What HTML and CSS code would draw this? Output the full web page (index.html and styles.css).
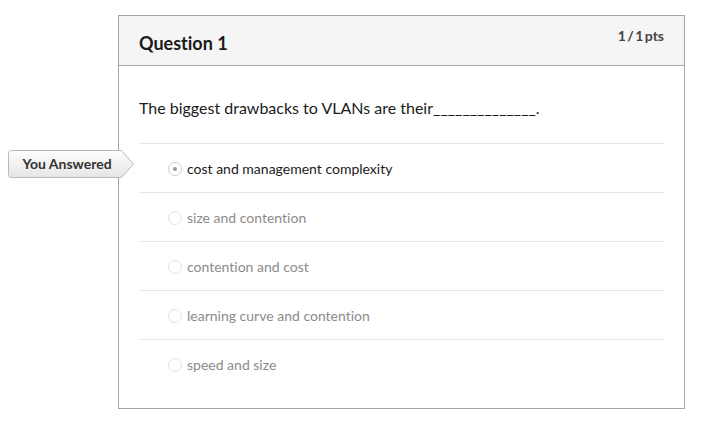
FILE: index.html
```html
<!DOCTYPE html>
<html>
<head>
<meta charset="utf-8">
<link rel="stylesheet" href="styles.css">
</head>
<body>
<div class="page">
  <div class="card">
    <div class="header">
      <h2 class="title">Question 1</h2>
      <div class="pts">1 / 1 pts</div>
    </div>
    <div class="body">
      <p class="question">The biggest drawbacks to VLANs are their______________.</p>
      <div class="answers">
        <div class="answer selected">
          <span class="radio"><span class="dot"></span></span>
          <span class="label">cost and management complexity</span>
          <div class="tag">
            <svg class="tag-shape" width="127" height="28" viewBox="0 0 127 28">
              <defs>
                <linearGradient id="g" x1="0" y1="0" x2="0" y2="1">
                  <stop offset="0" stop-color="#fdfdfd"/>
                  <stop offset="1" stop-color="#e6e6e6"/>
                </linearGradient>
              </defs>
              <path d="M3.5 0.5 H113.5 L125.5 14 L113.5 27.5 H3.5 Q0.5 27.5 0.5 24.5 V3.5 Q0.5 0.5 3.5 0.5 Z" fill="url(#g)" stroke="#b9b9b9"/>
            </svg>
            <span class="tag-text">You Answered</span>
          </div>
        </div>
        <div class="answer">
          <span class="radio"></span>
          <span class="label">size and contention</span>
        </div>
        <div class="answer">
          <span class="radio"></span>
          <span class="label">contention and cost</span>
        </div>
        <div class="answer">
          <span class="radio"></span>
          <span class="label">learning curve and contention</span>
        </div>
        <div class="answer">
          <span class="radio"></span>
          <span class="label">speed and size</span>
        </div>
      </div>
    </div>
  </div>
</div>
</body>
</html>
```
FILE: styles.css
```css
html, body {
  margin: 0;
  padding: 0;
  background: #ffffff;
}
body {
  font-family: Lato, "Liberation Sans", sans-serif;
  font-variant-ligatures: none;
  color: #2d3b45;
}
.page {
  padding: 15px 0 0 118px;
}
.card {
  position: relative;
  width: 565px;
  border: 1px solid #a6a6a6;
  background: #fff;
}
.header {
  display: flex;
  justify-content: space-between;
  align-items: flex-start;
  height: 49px;
  background: #f5f5f5;
  border-bottom: 1px solid #a6a6a6;
  padding: 0 20px;
}
.title {
  margin: 0;
  padding-top: 16px;
  font-size: 18px;
  font-weight: 700;
  line-height: 22px;
  color: #1b1b1b;
}
.pts {
  padding-top: 11px;
  font-size: 14px;
  font-weight: 700;
  line-height: 18px;
  color: #444;
  word-spacing: -2px;
}
.body {
  padding: 30px 20px 20px;
}
.question {
  margin: 0 0 23px;
  font-size: 16px;
  line-height: 24px;
  color: #1b1b1b;
}
.answers {
  display: flex;
  flex-direction: column;
}
.answer {
  position: relative;
  display: flex;
  align-items: center;
  height: 46px;
  padding-top: 2px;
  border-top: 1px solid #e6e6e6;
  padding-left: 29px;
  font-size: 14px;
  color: #8b8b8b;
}
.answer.selected {
  color: #1b1b1b;
}
.radio {
  width: 12px;
  height: 12px;
  border: 1px solid #e2e2e2;
  border-radius: 50%;
  margin-right: 5px;
  display: flex;
  align-items: center;
  justify-content: center;
  background: #fff;
}
.selected .radio {
  border-color: #cfcfcf;
}
.dot {
  width: 4px;
  height: 4px;
  border-radius: 50%;
  background: #9a9a9a;
}
.label {
  line-height: 18px;
}
.tag {
  position: absolute;
  left: -111px;
  top: -8px;
  width: 127px;
  height: 28px;
}
.selected .tag {
  top: 6px;
  left: -131px;
}
.tag-shape {
  position: absolute;
  left: 0;
  top: 0;
}
.tag-text {
  position: absolute;
  left: 2px;
  top: 0;
  width: 114px;
  height: 28px;
  line-height: 27px;
  text-align: center;
  font-size: 14px;
  font-weight: 700;
  color: #333;
}
```
